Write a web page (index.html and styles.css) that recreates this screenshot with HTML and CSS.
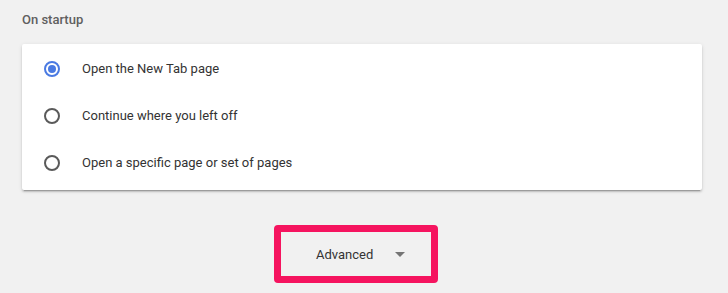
FILE: index.html
```html
<!DOCTYPE html>
<html lang="en">
<head>
    <meta charset="UTF-8">
    <title>Settings - On startup</title>
    <link rel="stylesheet" href="styles.css">
</head>
<body>
    <div class="section">
        <h2 class="section-title">On startup</h2>
        <div class="card">
            <label class="radio-row">
                <span class="radio checked"></span>
                <span class="radio-label">Open the New Tab page</span>
            </label>
            <label class="radio-row">
                <span class="radio"></span>
                <span class="radio-label">Continue where you left off</span>
            </label>
            <label class="radio-row">
                <span class="radio"></span>
                <span class="radio-label">Open a specific page or set of pages</span>
            </label>
        </div>
    </div>

    <div class="advanced-wrap">
        <button class="advanced">
            <span>Advanced</span>
            <svg class="arrow" width="10" height="5" viewBox="0 0 10 5"><path d="M0 0h10L5 5z" fill="#757575"/></svg>
        </button>
    </div>
</body>
</html>
```

FILE: styles.css
```css
body { margin: 0; background: #f1f1f1; font-family: Roboto, "Liberation Sans", sans-serif; font-size: 13px; color: #333; }
.section { width: 680px; margin-left: 22px; padding-top: 10px; }
.section-title { margin: 0 0 14px; font-size: 13px; font-weight: 500; line-height: 20px; color: #5f5f5f; }
.card { background: #fff; border-radius: 2px; padding: 1px 0 4px; box-shadow: 0 2px 2px 0 rgba(0,0,0,.14), 0 1px 4px 0 rgba(0,0,0,.10), 0 3px 1px -2px rgba(0,0,0,.2); }
.radio-row { display: flex; align-items: center; height: 47px; padding-left: 22px; }
.radio { box-sizing: border-box; width: 16px; height: 16px; border: 2px solid #5a5a5a; border-radius: 50%; margin-right: 22px; position: relative; }
.radio.checked { border-color: #4a7ae2; }
.radio.checked::after { content: ""; position: absolute; left: 2px; top: 2px; width: 8px; height: 8px; border-radius: 50%; background: #4a7ae2; }
.radio-label { line-height: 20px; }
.advanced-wrap { padding-top: 35px; padding-left: 274px; }
.advanced { box-sizing: border-box; width: 164px; height: 58px; border: 7px solid #f5145f; border-radius: 4px; background: #f1f1f1; display: flex; align-items: center; padding: 0 0 0 35px; font-family: Roboto, "Liberation Sans", sans-serif; font-size: 13px; color: #333; }
.arrow { margin-left: 22px; }
```
